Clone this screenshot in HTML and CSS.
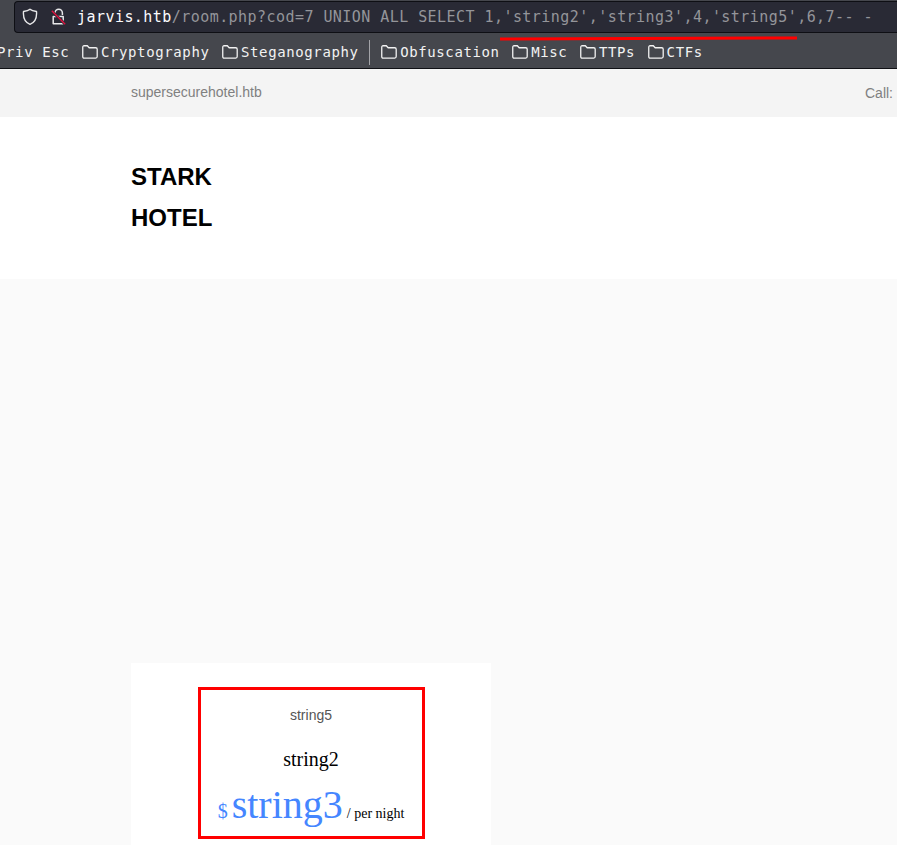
FILE: index.html
```html
<!DOCTYPE html>
<html lang="en">
<head>
<meta charset="utf-8">
<title>Stark Hotel</title>
<link rel="stylesheet" href="styles.css">
</head>
<body>
<svg class="defs" width="0" height="0" aria-hidden="true">
  <symbol id="folder" viewBox="0 0 16 14"><path d="M.75 11.6V2.2Q.75.75 2.2.75H5.3L7.2 2.75H13.7Q15.2 2.75 15.2 4.25V11.6Q15.2 13.1 13.7 13.1H2.2Q.75 13.1.75 11.6Z" fill="none" stroke="#f2f2f2" stroke-width="1.3"/></symbol>
</svg>
<header class="browser">
  <div class="address">
    <svg class="shield" width="16" height="18" viewBox="0 0 16 18"><path d="M8 1.2C6.5 2.6 4 3.2 1.5 3.5C1 9.5 2.8 14.3 8 16.3C13.2 14.3 15 9.5 14.5 3.5C12 3.2 9.5 2.6 8 1.2Z" fill="none" stroke="#e8e8ea" stroke-width="1.4" stroke-linejoin="round"/></svg>
    <svg class="lock" width="16" height="18" viewBox="0 0 16 18"><path d="M4 7V5A3.7 3.7 0 0 1 11.4 5V7M2.2 8.5H12.2V15.7H2.2Z" fill="none" stroke="#e8e8ea" stroke-width="1.5" stroke-linejoin="round"/><path d="M.8 3L14.2 16.3" stroke="#292a35" stroke-width="3"/><path d="M.8 2.8L14.2 16.2" stroke="#e3123f" stroke-width="1.3"/></svg>
    <span class="url"><b>jarvis.htb</b>/room.php?cod=7 UNION ALL SELECT 1,'string2','string3',4,'string5',6,7-- -</span>
  </div>
  <nav class="bookmarks">
    <span class="bookmark">Priv Esc</span>
    <span class="bookmark"><svg width="16" height="14"><use href="#folder"/></svg>Cryptography</span>
    <span class="bookmark"><svg width="16" height="14"><use href="#folder"/></svg>Steganography</span>
    <i class="divider"></i>
    <span class="bookmark"><svg width="16" height="14"><use href="#folder"/></svg>Obfuscation</span>
    <span class="bookmark"><svg width="16" height="14"><use href="#folder"/></svg>Misc</span>
    <span class="bookmark"><svg width="16" height="14"><use href="#folder"/></svg>TTPs</span>
    <span class="bookmark"><svg width="16" height="14"><use href="#folder"/></svg>CTFs</span>
  </nav>
  <svg class="underline" width="298" height="5" viewBox="0 0 298 5"><path d="M0 3L297 2" stroke="#f00" stroke-width="3"/></svg>
</header>
<div class="topbar"><span>supersecurehotel.htb</span><span class="call">Call:</span></div>
<div class="brand"><h1>STARK<br>HOTEL</h1></div>
<main class="content">
  <section class="room">
    <div class="highlight">
      <p class="description">string5</p>
      <h2>string2</h2>
      <p class="price"><span class="currency">$</span><span class="amount">string3</span><span class="unit">/ per night</span></p>
    </div>
  </section>
</main>
</body>
</html>
```

FILE: styles.css
```css
* { box-sizing: border-box; }
body {
  margin: 0;
  height: 845px;
  overflow: hidden;
  display: flex;
  flex-direction: column;
  background: #fafafa;
  font-family: "Liberation Sans", sans-serif;
}
.defs { position: absolute; }
.browser {
  position: relative;
  flex: none;
  height: 69px;
  padding-top: 1px;
  background: #45474d;
  border-bottom: 1px solid #101115;
  font-family: "DejaVu Sans Mono", monospace;
  white-space: nowrap;
}
.address {
  display: flex;
  align-items: center;
  height: 32px;
  margin-left: 14px;
  padding-left: 7px;
  background: #292a35;
  border: 1px solid #0e0f14;
  border-right: 0;
  border-radius: 4px 0 0 4px;
}
.lock { margin-left: 13px; }
.url {
  margin-left: 10px;
  color: #94959a;
  font-size: 15px;
  letter-spacing: 0.445px;
  line-height: 30px;
}
.url b { color: #fbfbfe; font-weight: 400; }
.bookmarks {
  display: flex;
  align-items: center;
  gap: 12.5px;
  height: 35px;
  margin-left: -3px;
  padding-top: 3px;
  color: #f2f2f2;
  font-size: 14px;
  letter-spacing: 0.62px;
}
.bookmark { display: flex; flex: none; align-items: center; gap: 3px; }
.divider { width: 1px; height: 25px; margin: 0 -1.5px 0 -2px; background: #a3a4a8; }
.underline { position: absolute; left: 500px; top: 36px; }
.topbar {
  display: flex;
  flex: none;
  justify-content: space-between;
  height: 48px;
  padding: 0 4px 0 131px;
  background: #f4f4f4;
  color: #808080;
  font-size: 14px;
  line-height: 46px;
}
.call { padding-top: 1px; }
.brand { flex: none; height: 162px; padding: 39px 0 0 131px; background: #fff; }
h1 { margin: 0; color: #000; font-size: 24px; line-height: 41px; }
.content { flex: 1; padding: 384px 0 0 131px; }
.room { width: 360px; height: 182px; padding: 24px 0 0 67px; background: #fff; }
.highlight {
  width: 227px;
  height: 152px;
  padding-right: 1px;
  border: 3px solid #f00;
  text-align: center;
}
.description { margin: 15px 0 0; color: #555; font-size: 14px; line-height: 20px; }
h2 {
  margin: 19px 0 0;
  color: #000;
  font: 400 20px/30px "Liberation Serif", serif;
}
.price {
  display: flex;
  justify-content: center;
  align-items: baseline;
  margin: 6px 0 0;
  font-family: "Liberation Serif", serif;
  line-height: 50px;
  white-space: nowrap;
}
.currency { color: #4586ff; font-size: 20px; }
.amount { margin: 0 4px; color: #4586ff; font-size: 40px; }
.unit { color: #000; font-size: 14px; }
```
